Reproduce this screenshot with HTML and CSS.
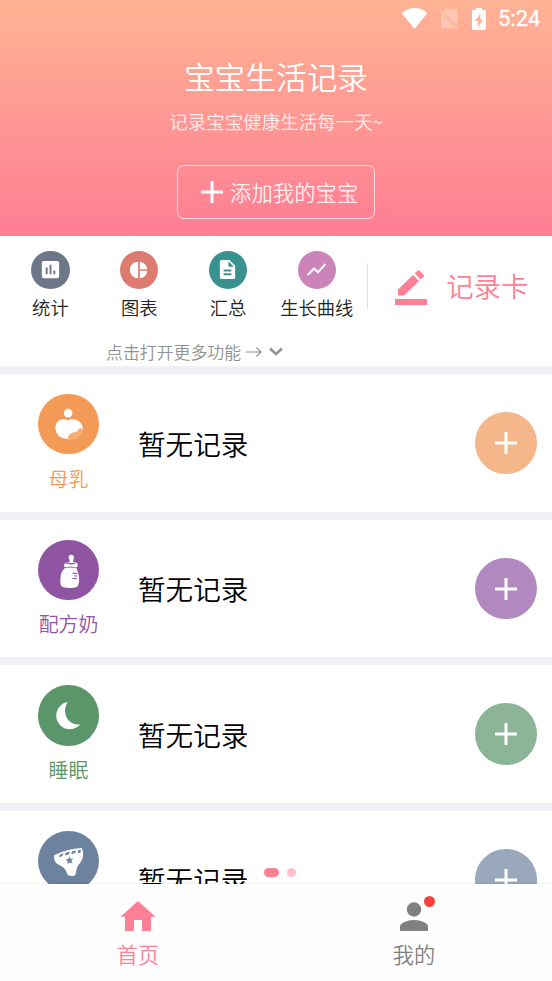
FILE: index.html
```html
<!DOCTYPE html>
<html lang="zh-CN">
<head>
<meta charset="utf-8">
<title>宝宝生活记录</title>
<link rel="stylesheet" href="styles.css">
</head>
<body>
<div class="app">
  <header class="hero">
    <div class="status">
      <svg class="wifi" viewBox="0 0 28 22"><path d="M14 22 .5 5.2Q14-5 27.500 5.200Z"/></svg>
      <svg class="sim" viewBox="0 0 20 22"><path d="M7 1H16.500a2 2 0 0 1 2 2v14.500L4 3.500ZM2 5.500l14.500 15H4a2 2 0 0 1-2-2Z"/><path class="slash" d="M.5 2l18.500 19"/></svg>
      <svg class="battery" viewBox="0 0 14 22"><path fill-rule="evenodd" d="M4 0h6v2h2.600Q14 2 14 3.400v17.200Q14 22 12.600 22H1.400Q0 22 0 20.600V3.400Q0 2 1.400 2H4ZM8.500 5.500 3 13h3.200v6L11 11.500H8.200Z"/></svg>
      <span class="clock">5:24</span>
    </div>
    <h1 class="title">宝宝生活记录</h1>
    <p class="subtitle">记录宝宝健康生活每一天~</p>
    <button class="add-baby"><svg class="add-icon" viewBox="0 0 22 22"><path d="M11 0v22M0 11h22"/></svg><span>添加我的宝宝</span></button>
  </header>

  <section class="tools">
    <div class="tools-main">
      <div class="tool"><span class="tool-icon slate"><svg viewBox="0 0 24 24"><path d="M19 3H5a2 2 0 0 0-2 2v14a2 2 0 0 0 2 2h14a2 2 0 0 0 2-2V5a2 2 0 0 0-2-2ZM9 17H7v-7h2Zm4 0h-2V7h2Zm4 0h-2v-4h2Z"/></svg></span><span>统计</span></div>
      <div class="tool"><span class="tool-icon red"><svg viewBox="0 0 24 24"><path d="M11 2v20A10 10 0 0 1 11 2Zm2 0v9h9A10 10 0 0 0 13 2Zm0 11v9a10 10 0 0 0 9-9Z"/></svg></span><span>图表</span></div>
      <div class="tool"><span class="tool-icon teal"><svg viewBox="0 0 24 24"><path d="M14 2H6a2 2 0 0 0-2 2v16a2 2 0 0 0 2 2h12a2 2 0 0 0 2-2V8Zm2 16H8v-2h8Zm0-4H8v-2h8Zm-3-5V3.500L18.500 9Z"/></svg></span><span>汇总</span></div>
      <div class="tool"><span class="tool-icon orchid"><svg viewBox="0 0 24 24"><path d="m3.500 18.500 6-6 4 4L22 6.920l-1.410-1.410-7.090 7.970-4-4L2 16.990Z"/></svg></span><span>生长曲线</span></div>
      <div class="record-card">
        <svg class="pencil" viewBox="0 0 32 35"><path d="M0 29h32v6H0ZM3 19.500 18 5l6 6L9 25.500H3ZM19.800 3.300 22.400.7Q23.500-.3 24.600.7L28.500 4.600Q29.500 5.700 28.500 6.800L25.800 9.400Z"/></svg>
        <span>记录卡</span>
      </div>
    </div>
    <div class="more"><span>点击打开更多功能</span><svg class="arrow" viewBox="0 0 16 12"><path d="M0 6h15M10.500 1.500 15 6l-4.500 4.500"/></svg><svg class="chevron" viewBox="0 0 14 9"><path d="m1 1.500 6 5.500 6-5.500"/></svg></div>
  </section>

  <main class="records">
    <article class="record orange">
      <div class="kind"><span class="kind-icon"><svg viewBox="0 0 60 60"><circle cx="30" cy="19" r="4.300"/><path d="M30 26.300Q34 24 38 25.500 45 28.500 44.500 35 42 45.500 30 45 18.500 44.500 17.300 34.500 17 28 22 25.700 26 24 30 26.300Z"/><path class="baby" d="M29.500 45.200Q29.500 38 39 37.500 39.500 34 42.500 34 45 34.500 44.500 37.500 41 45.500 29.500 45.200Z"/></svg></span><span>母乳</span></div>
      <strong class="value">暂无记录</strong>
      <span class="plus"><svg viewBox="0 0 22 22"><path d="M11 0v22M0 11h22"/></svg></span>
    </article>
    <article class="record purple">
      <div class="kind"><span class="kind-icon"><svg viewBox="0 0 60 60"><path d="M31.500 21.500Q32 20 30.500 18.500 30 15 33 14.700 36.500 15 35.500 18.500L34.800 21.500Q40 22 39.500 25 39 28 36.500 27Q32 25.500 28.500 27 25.500 27.500 25.800 25 26.500 22 31.500 21.500Z"/><path d="M26.500 28Q32 26.500 38.300 28L40 33Q42 40 39.500 46 37 48.500 29 47.500 22.500 47.500 22.200 43 21.500 32 26.500 28Z"/><path class="marks" d="M28 22.500q5 2 9 .5M34.500 33l4.500.5M36 35.500l3 .5M34 38l4.500.5"/></svg></span><span>配方奶</span></div>
      <strong class="value">暂无记录</strong>
      <span class="plus"><svg viewBox="0 0 22 22"><path d="M11 0v22M0 11h22"/></svg></span>
    </article>
    <article class="record green">
      <div class="kind"><span class="kind-icon"><svg viewBox="0 0 60 60"><path d="M29.500 17C22.500 28 30.500 41 42 39.200 37 44.500 28.500 46 22.500 40.500 14 32 19 18.500 29.500 17Z"/></svg></span><span>睡眠</span></div>
      <strong class="value">暂无记录</strong>
      <span class="plus"><svg viewBox="0 0 22 22"><path d="M11 0v22M0 11h22"/></svg></span>
    </article>
    <article class="record blue">
      <div class="kind"><span class="kind-icon"><svg viewBox="0 0 60 60"><path d="M16 24Q29 18 43.500 17 47 25 42 31.500 38 35.500 37.500 42.500 37 45.500 32 44.500 29.500 45 28 40 26 35.500 20.500 33.500 15.500 31.500 16 24Z"/><path class="holes" d="m18.500 25-1 3M21.500 23.500l4-1.500-1.500 3-3.300 1ZM27.500 21.500l4.500-1.200-1.500 3-4 1ZM34 20l4-.7-1.500 2.800-3.500.8ZM40 19l2.500-.5-.3 3-2.500.5ZM31 25l1.200 2.600 2.900-.2-1.900 2.200 1.200 2.700-2.800-1-2.300 1.600.3-2.900-2.300-1.700 2.800-.6Z"/></svg></span></div>
      <strong class="value">暂无记录</strong>
      <span class="plus"><svg viewBox="0 0 22 22"><path d="M11 0v22M0 11h22"/></svg></span>
    </article>
  </main>

  <div class="pager"><i class="current"></i><i></i></div>

  <nav class="tabs">
    <div class="tab active"><svg viewBox="0 0 36 36"><path d="M18 3 35.500 18.700H31V33H22V22H14V33H5V18.700H.5Z"/></svg><span>首页</span></div>
    <div class="tab"><div class="profile"><svg viewBox="0 0 36 36"><circle cx="18" cy="11.500" r="7.200"/><path d="M4 33v-4.500C4 25 11 22 18 22s14 3 14 6.500V33Z"/></svg><i class="badge"></i></div><span>我的</span></div>
  </nav>
</div>
</body>
</html>
```

FILE: styles.css
```css
* { box-sizing: border-box; }
body { margin: 0; font-family: "Noto Sans CJK SC", sans-serif; font-weight: 350; }
h1, p { margin: 0; font-weight: 350; }
svg { display: block; flex: none; overflow: visible; }

.app {
  position: relative;
  display: flex;
  flex-direction: column;
  width: 552px;
  height: 981px;
  overflow: hidden;
  background: #fff;
}

.hero {
  flex: none;
  display: flex;
  flex-direction: column;
  align-items: center;
  height: 236px;
  background: linear-gradient(#ffb394, #ff7d93);
  color: #fff;
}
.status {
  display: flex;
  align-items: center;
  align-self: stretch;
  justify-content: flex-end;
  height: 38px;
  padding-right: 12px;
}
.status svg { height: 22px; fill: #fff; }
.status .wifi { width: 27px; height: 21px; margin: 0 11px 2px 0; }
.status .sim { width: 20px; height: 22px; margin: 0 13px 1px 0; opacity: .3; }
.battery { width: 14px; margin: 0 12px 1px 0; }
.slash { stroke: #fff; stroke-width: 1.5; }
.clock { font: 400 22px/38px Roboto, sans-serif; width: 42px; white-space: nowrap; -webkit-text-stroke: .3px; }
.title { margin-top: 16px; font-size: 30.7px; line-height: 44px; }
.subtitle { margin-top: 9px; font-size: 18.5px; line-height: 28px; color: rgba(255,255,255,.87); }
.add-baby {
  display: flex;
  align-items: center;
  gap: 7px;
  width: 198px;
  height: 54px;
  margin-top: 30px;
  padding: 0 0 0 23px;
  border: 1px solid rgba(255,255,255,.75);
  border-radius: 7px;
  background: none;
  color: rgba(255,255,255,.87);
  font: 350 21.4px/30px "Noto Sans CJK SC", sans-serif;
}
.add-icon { width: 22px; height: 22px; stroke: #fff; stroke-width: 3; }

.tools { flex: none; height: 130px; }
.tools-main { display: flex; height: 100px; padding-left: 6px; }
.tool {
  flex: none;
  display: flex;
  flex-direction: column;
  align-items: center;
  width: 88.8px;
  padding-top: 14.6px;
  font-size: 18.3px;
  line-height: 28px;
  color: #222;
  white-space: nowrap;
}
.tool-icon {
  display: grid;
  place-items: center;
  width: 38.4px;
  height: 38.4px;
  margin-bottom: 4px;
  border-radius: 50%;
}
.tool-icon svg { width: 23px; height: 23px; fill: #fff; }
.tool:nth-child(2) svg { width: 20px; height: 20px; }
.slate { background: #6d7787; }
.red { background: #dd7b70; }
.teal { background: #379290; }
.orchid { background: #ca84b9; }
.record-card {
  display: flex;
  align-items: center;
  gap: 19px;
  height: 46px;
  margin: 27px 0 0 6px;
  padding-left: 27px;
  border-left: 1px solid #e3e3e3;
  color: #ff7f95;
  font-size: 27.4px;
  line-height: 40px;
  white-space: nowrap;
}
.record-card span { margin-top: -2px; }
.pencil { width: 32px; height: 35px; margin-top: 2px; fill: currentColor; }
.more {
  display: flex;
  align-items: center;
  height: 31px;
  padding-left: 106px;
  color: #929292;
  font-size: 16.9px;
  line-height: 28px;
}
.more svg { fill: none; stroke: currentColor; }
.arrow { width: 16px; height: 12px; margin-left: 5px; stroke-width: 1.2; }
.chevron { width: 14px; height: 9px; margin-left: 7px; stroke-width: 2.6; }

.records { flex: 1; min-height: 0; overflow: hidden; }
.record {
  display: flex;
  align-items: flex-start;
  height: 145.6px;
  padding-right: 15px;
  border-top: 8px solid #f0f0f5;
}
.kind {
  flex: none;
  display: flex;
  flex-direction: column;
  align-items: center;
  width: 137px;
  padding-top: 20px;
  font-size: 19.9px;
  line-height: 30px;
  color: var(--tone);
}
.kind-icon { width: 60.4px; height: 60.4px; margin-bottom: 9.3px; border-radius: 50%; background: var(--tone); }
.kind-icon svg { width: 60.4px; height: 60.4px; fill: #fff; }
.kind-icon .baby { fill: #f8ad72; }
.marks { fill: none; stroke: var(--tone); stroke-width: 1.2; }
.kind-icon .holes { fill: var(--tone); stroke: none; }
.value { flex: 1; padding: 48.700px 0 0 1px; font-size: 27.6px; line-height: 40px; font-weight: 350; color: #000; }
.plus {
  display: grid;
  place-items: center;
  width: 61.6px;
  height: 61.6px;
  margin-top: 38.2px;
  border-radius: 50%;
  background: var(--soft);
}
.plus svg { width: 22px; height: 22px; stroke: #fff; stroke-width: 3; }
.orange { --tone: #f29a56; --soft: #f5b789; }
.purple { --tone: #8f55a3; --soft: #b188bf; }
.green { --tone: #5b956a; --soft: #8cb497; }
.blue { --tone: #6d829e; --soft: #99a8bc; }

.pager { position: absolute; left: 264px; top: 868px; display: flex; gap: 8px; }
.pager i { width: 9px; height: 9px; border-radius: 5px; background: #ffbdc9; }
.pager .current { width: 15px; background: #ff7f95; }

.tabs {
  position: relative;
  flex: none;
  display: flex;
  height: 97px;
  background: #fefefe;
  box-shadow: 0 -1px 2px rgba(0,0,0,.07);
}
.tab {
  flex: 1;
  display: flex;
  flex-direction: column;
  align-items: center;
  padding-top: 14px;
  color: #808080;
  font-size: 21.2px;
  line-height: 30px;
}
.tab svg { width: 36px; height: 36px; margin-bottom: 5px; fill: currentColor; }
.tab.active { color: #ff7f95; }
.profile { position: relative; }
.badge { position: absolute; top: -2px; right: -3px; width: 11px; height: 11px; border-radius: 50%; background: #f9423a; }
```
